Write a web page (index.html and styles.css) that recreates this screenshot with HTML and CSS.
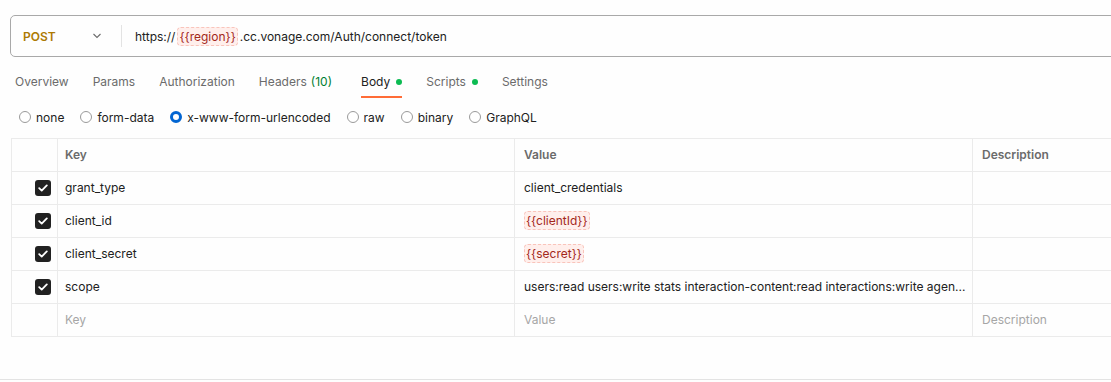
FILE: index.html
```html
<!DOCTYPE html>
<html lang="en">
<head>
<meta charset="UTF-8">
<meta name="viewport" content="width=device-width, initial-scale=1.0">
<title>POST token</title>
<link rel="stylesheet" href="styles.css">
</head>
<body>
    <div class="page">
        <div class="request-bar">
            <div class="method">
                <span class="method-name">POST</span>
                <svg class="chevron" width="10" height="6" viewBox="0 0 10 6"><path d="M1.5 1l3.5 3.5L8.5 1" fill="none" stroke="#6b6b6b" stroke-width="1.1"/></svg>
            </div>
            <div class="url">https://<span class="var">{{region}}</span>.cc.vonage.com/Auth/connect/token</div>
        </div>

        <div class="tabs">
            <span class="tab">Overview</span>
            <span class="tab">Params</span>
            <span class="tab">Authorization</span>
            <span class="tab">Headers <span class="count">(10)</span></span>
            <span class="tab active">Body <i class="dot"></i></span>
            <span class="tab">Scripts <i class="dot"></i></span>
            <span class="tab">Settings</span>
        </div>

        <div class="body-types">
            <label class="radio"><i></i>none</label>
            <label class="radio"><i></i>form-data</label>
            <label class="radio checked"><i></i>x-www-form-urlencoded</label>
            <label class="radio"><i></i>raw</label>
            <label class="radio"><i></i>binary</label>
            <label class="radio"><i></i>GraphQL</label>
        </div>

        <table class="params">
            <colgroup>
                <col class="c-check">
                <col class="c-key">
                <col class="c-value">
                <col class="c-desc">
            </colgroup>
            <tr class="head">
                <td></td>
                <td class="key">Key</td>
                <td class="value">Value</td>
                <td class="desc">Description</td>
            </tr>
            <tr>
                <td class="check"><span class="box"><svg width="10" height="8" viewBox="0 0 10 8"><path d="M1.2 4.2l2.5 2.4L8.8 1.4" fill="none" stroke="#fff" stroke-width="1.8" stroke-linecap="round" stroke-linejoin="round"/></svg></span></td>
                <td class="key">grant_type</td>
                <td class="value">client_credentials</td>
                <td class="desc"></td>
            </tr>
            <tr>
                <td class="check"><span class="box"><svg width="10" height="8" viewBox="0 0 10 8"><path d="M1.2 4.2l2.5 2.4L8.8 1.4" fill="none" stroke="#fff" stroke-width="1.8" stroke-linecap="round" stroke-linejoin="round"/></svg></span></td>
                <td class="key">client_id</td>
                <td class="value"><span class="var">{{clientId}}</span></td>
                <td class="desc"></td>
            </tr>
            <tr>
                <td class="check"><span class="box"><svg width="10" height="8" viewBox="0 0 10 8"><path d="M1.2 4.2l2.5 2.4L8.8 1.4" fill="none" stroke="#fff" stroke-width="1.8" stroke-linecap="round" stroke-linejoin="round"/></svg></span></td>
                <td class="key">client_secret</td>
                <td class="value"><span class="var">{{secret}}</span></td>
                <td class="desc"></td>
            </tr>
            <tr>
                <td class="check"><span class="box"><svg width="10" height="8" viewBox="0 0 10 8"><path d="M1.2 4.2l2.5 2.4L8.8 1.4" fill="none" stroke="#fff" stroke-width="1.8" stroke-linecap="round" stroke-linejoin="round"/></svg></span></td>
                <td class="key">scope</td>
                <td class="value"><span class="clip">users:read users:write stats interaction-content:read interactions:write agen...</span></td>
                <td class="desc"></td>
            </tr>
            <tr class="empty">
                <td></td>
                <td class="key">Key</td>
                <td class="value">Value</td>
                <td class="desc">Description</td>
            </tr>
        </table>
    </div>
    <div class="bottom-panel"></div>
</body>
</html>
```

FILE: styles.css
```css
:root {
    --text: #212121;
    --text-soft: #6b6b6b;
    --text-faint: #a6a6a6;
    --line: #ebebeb;
    --orange: #ff6c37;
    --green: #0cbb52;
}
html, body {
    margin: 0;
    background: #fefefe;
    overflow: hidden;
}
body {
    font-family: Inter, "Noto Sans", sans-serif;
    font-size: 12px;
    color: var(--text);
    width: 1111px;
    height: 382px;
}
.page {
    width: 1300px;
    padding-top: 15px;
}

/* request bar */
.request-bar {
    display: flex;
    align-items: center;
    margin-left: 10px;
    height: 40px;
    border: 1px solid #a9a9a9;
    border-radius: 5px;
}
.method {
    display: flex;
    align-items: center;
    justify-content: space-between;
    width: 111px;
    box-sizing: border-box;
    padding: 0 10px 0 12px;
    height: 22px;
    border-right: 1px solid #e3e3e3;
}
.method-name {
    color: #ad7a03;
    font-weight: 600;
}
.chevron {
    margin-right: 9px;
}
.url {
    padding-left: 13px;
}
.var {
    display: inline-block;
    color: #a3271b;
    background: #ffefec;
    border: 1px dashed #f9c4bb;
    border-radius: 4px;
    padding: 0 1px;
    line-height: 17px;
    margin: 0 2px;
}
.value .var {
    margin: 0;
}

/* tabs */
.tabs {
    display: flex;
    gap: 24px;
    margin: 10px 0 0 15px;
    height: 31px;
}
.tab {
    display: flex;
    align-items: center;
    gap: 5px;
    color: var(--text-soft);
    height: 29px;
    border-bottom: 2px solid transparent;
}
.tab.active {
    color: var(--text);
    border-bottom-color: var(--orange);
    margin-left: 5px;
}
.count {
    color: #007f31;
    margin-left: -1px;
}
.dot {
    width: 6px;
    height: 6px;
    border-radius: 50%;
    background: var(--green);
    margin-left: 1px;
}

/* body type radios */
.body-types {
    display: flex;
    align-items: center;
    gap: 16px;
    margin: 9px 0 0 19px;
    height: 20px;
}
.radio {
    display: flex;
    align-items: center;
    gap: 5px;
    color: var(--text);
}
.radio i {
    width: 12px;
    height: 12px;
    box-sizing: border-box;
    border: 1px solid #9a9a9a;
    border-radius: 50%;
    background: #fff;
}
.radio.checked i {
    border: 3.5px solid #0265d2;
}

/* params table */
.params {
    margin: 11px 0 0 11px;
    border-collapse: collapse;
    table-layout: fixed;
    width: 1200px;
}
.c-check { width: 46px; }
.c-key { width: 457px; }
.c-value { width: 458px; }
.params td {
    border: 1px solid var(--line);
    height: 33px;
    padding: 0 0 1px 7px;
    box-sizing: border-box;
    white-space: nowrap;
    overflow: hidden;
}
.params td.value,
.params td.desc {
    padding-left: 9px;
}
.params td.check {
    padding: 0;
    text-align: right;
}
.head td {
    color: var(--text-soft);
    font-weight: 600;
}
.empty td {
    color: var(--text-faint);
}
.box {
    display: inline-flex;
    align-items: center;
    justify-content: center;
    width: 16px;
    height: 16px;
    border-radius: 3px;
    background: #212121;
    margin-right: 6px;
    vertical-align: middle;
}
.clip {
    display: block;
    width: 443px;
    overflow: hidden;
}

.bottom-panel {
    margin-top: 42px;
    border-top: 1px solid #e3e3e3;
}
```
